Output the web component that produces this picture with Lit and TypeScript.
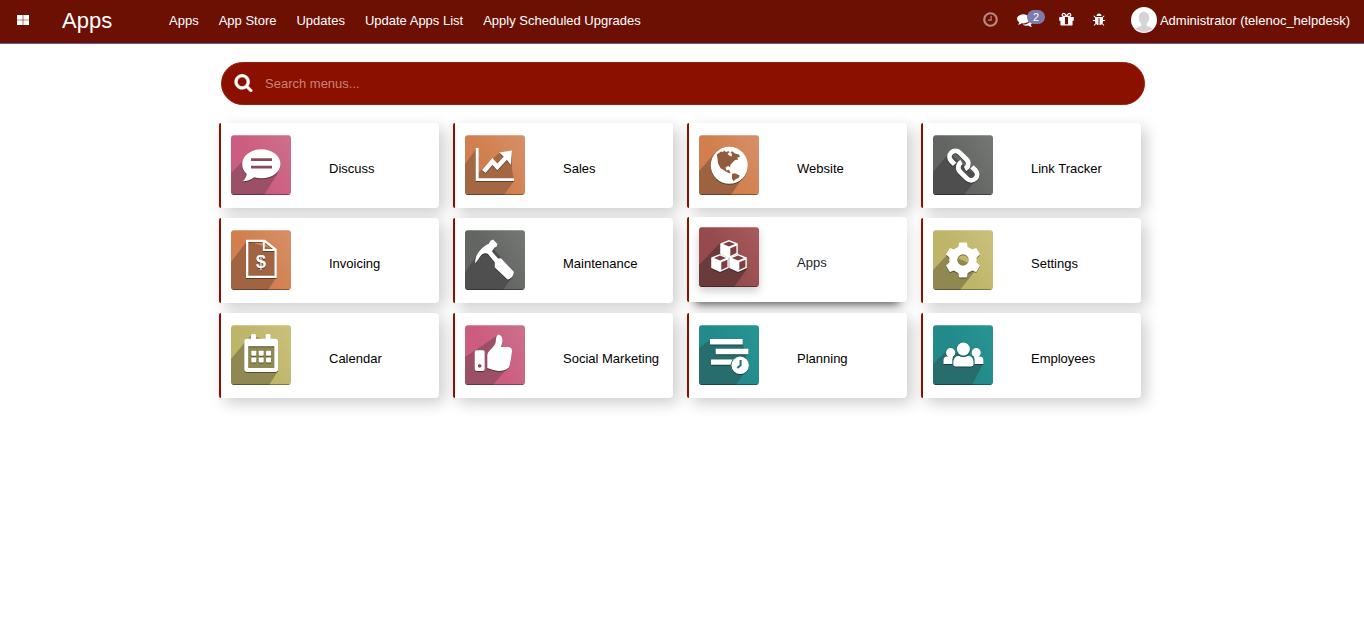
import { LitElement, html, svg, css } from "lit";
import { customElement, property } from "lit/decorators.js";

const SEARCH = "M1216 832q0-185-131.5-316.5t-316.5-131.5-316.5 131.5-131.5 316.5 131.5 316.5 316.5 131.5 316.5-131.5 131.5-316.5zm512 832q0 52-38 90t-90 38q-54 0-90-38l-343-342q-179 124-399 124-143 0-273.5-55.5t-225-150-150-225-55.5-273.5 55.5-273.5 150-225 225-150 273.5-55.5 273.5 55.5 225 150 150 225 55.5 273.5q0 220-124 399l343 343q37 37 37 90z";
const CLOCK = "M1024 544v448q0 14-9 23t-23 9h-320q-14 0-23-9t-9-23v-64q0-14 9-23t23-9h224v-352q0-14 9-23t23-9h64q14 0 23 9t9 23zm416 352q0-148-73-273t-198-198-273-73-273 73-198 198-73 273 73 273 198 198 273 73 273-73 198-198 73-273zm224 0q0 209-103 385.5t-279.5 279.5-385.5 103-385.5-103-279.5-279.5-103-385.5 103-385.5 279.5-279.5 385.5-103 385.5 103 279.5 279.5 103 385.5z";
const COMMENTS = "M1408 768q0 139-94 257t-256.5 186.5-353.5 68.5q-86 0-176-16-124 88-278 128-36 9-86 16h-3q-11 0-20.5-8t-11.5-21q-1-3-1-6.5t.5-6.5 2-6l2.5-5 3.5-5.5 4-5 4.5-5 4-4.5q5-6 23-25t26-29.5 22.5-29 25-38.5 20.5-44q-124-72-195-177t-71-224q0-139 94-257t256.5-186.5 353.5-68.5 353.5 68.5 256.5 186.5 94 257zm384 256q0 120-71 224.5t-195 176.5q10 24 20.5 44t25 38.5 22.5 29 26 29.5 23 25q1 1 4 4.5t4.5 5 4 5 3.5 5.5l2.5 5 2 6 .5 6.5-1 6.5q-3 14-13 22t-22 7q-50-7-86-16-154-40-278-128-90 16-176 16-271 0-472-132 58 4 88 4 161 0 309-45t264-129q125-92 192-212t67-254q0-77-23-152 129 71 204 178t75 230z";
const GIFT = "M1056 1356v-716h-320v716q0 25 18 38.5t46 13.5h192q28 0 46-13.5t18-38.5zm-456-844h195l-126-161q-26-31-69-31-40 0-68 28t-28 68 28 68 68 28zm688-96q0-40-28-68t-68-28q-43 0-69 31l-125 161h194q40 0 68-28t28-68zm376 256v320q0 14-9 23t-23 9h-96v416q0 40-28 68t-68 28h-1088q-40 0-68-28t-28-68v-416h-96q-14 0-23-9t-9-23v-320q0-14 9-23t23-9h440q-93 0-158.5-65.5t-65.5-158.5 65.5-158.5 158.5-65.5q107 0 168 77l128 165 128-165q61-77 168-77 93 0 158.5 65.5t65.5 158.5-65.5 158.5-158.5 65.5h440q14 0 23 9t9 23z";
const BUG = "M1696 960q0 26-19 45t-45 19h-224q0 171-67 290l208 209q19 19 19 45t-19 45q-18 19-45 19t-45-19l-198-197q-5 5-15 13t-42 28.5-65 36.5-82 29-97 13v-896h-128v896q-51 0-101.5-13.5t-87-33-66-39-43.5-32.5l-15-14-183 207q-20 21-48 21-24 0-43-16-19-18-20.5-44.5t15.5-46.5l202-227q-58-114-58-274h-224q-26 0-45-19t-19-45 19-45 45-19h224v-294l-173-173q-19-19-19-45t19-45 45-19 45 19l173 173h844l173-173q19-19 45-19t45 19 19 45-19 45l-173 173v294h224q26 0 45 19t19 45zm-480-576h-640q0-133 93.5-226.5t226.5-93.5 226.5 93.5 93.5 226.5z";

const cube = (x: number, y: number) => svg`<g transform="translate(${x} ${y})">
  <path d="M0-9 8.8-5.4V4.9L0 9-8.8 4.9V-5.4z" fill="#fff"/>
  <path d="M0-7.4 6-5 0-2.5-6-5z" fill="#7d3f41"/>
  <path d="M1.3-.7 7.4-3.3V4L1.3 6.900z" fill="#7d3f41"/></g>`;

const tooth = (a: number) => svg`<path transform="rotate(${a} 30 30)" d="M25 18.500l1-5.200q.1-.8.900-.8h6.200q.8 0 .9.800l1 5.200z"/>`;

const LINK = "M-7 5.200H-11.800A5.900 5.900 0 0 1-11.800-6.600H-2A5.900 5.900 0 0 1 3.600 1.200";

interface App {
  name: string;
  from: string;
  to: string;
  shade: string;
  cast: string;
  glyph: unknown;
  active?: boolean;
}

const PINK = { from: "#cd5d80", to: "#cb718c" };
const ORANGE = { from: "#d17f4e", to: "#d79069" };
const GREY = { from: "#636562", to: "#757874" };
const OLIVE = { from: "#bfb568", to: "#cac17e" };
const TEAL = { from: "#23898a", to: "#279593" };

const APPS: App[] = [
  { name: "Discuss", ...PINK, shade: "#9b5067", cast: "M0 38 14 24 47 38 33 60H0z",
    glyph: svg`<path d="M30.300 14.300C41 14.300 49.500 20.800 49.500 28.900S41 43.300 30.300 43.300c-2.600 0-5-.4-7.300-1.100-3 2.400-7 4-11.200 4 2.200-2 3.600-4.300 3.900-7.300-2.900-2.600-4.500-6-4.500-10C11.200 20.800 19.700 14.300 30.300 14.300z"/><path d="M20 23.300h21v2.700H20zM20 30.700h21v2.700H20z" fill="#8a4a5d"/>` },
  { name: "Sales", ...ORANGE, shade: "#a36744", cast: "M0 29 11 14 13 14 13 38 34 18 47 16 47 34 49 46 39 60H0z",
    glyph: svg`<path d="M10.700 13h3v30.300H49V46H10.700z"/><path d="M18.800 36.500 27.500 26.500 32.300 32 42 21.500" fill="none" stroke="#fff" stroke-width="4.500"/><path d="M47 15.500 34.300 17.500 38 21 42.800 26 45.800 30z"/>` },
  { name: "Website", ...ORANGE, shade: "#9d6341", cast: "M0 36 17 17 48 36 32 60H0z",
    glyph: svg`<circle cx="30.300" cy="30.300" r="18.500"/><path d="M17.800 19.500 22 16.500 24 17 25 15.500 27 17 29.500 16 30.500 17.500 28.500 18.500 30 20.500 32.500 21.500 33 19 31.500 17.500 33 16.300 36 18.500 40 19.500 41 22 38 22.500 39.500 24.500 36 25 33.500 27.500 31 30.500 31.500 32.500 29 31 26.500 32.500 27.500 35.500 30 34.700 31.500 38 30 38.300 26 36 21.500 33 19 28.500 18.500 23.500z" fill="#925c3c"/><path d="M33 38.700 36 38.300 40.800 40.500 39.500 43 37 44 34.500 46.200 33 43.500z" fill="#925c3c"/>` },
  { name: "Link Tracker", ...GREY, shade: "#4d4e4d", cast: "M0 37 16 18 45 42 31 60H0z",
    glyph: svg`<g transform="translate(30.300 30.600) rotate(45)" fill="none" stroke="#fff" stroke-width="4.800"><path d=${LINK}/><path d=${LINK} transform="rotate(180)"/></g>` },
  { name: "Invoicing", ...ORANGE, shade: "#a06442", cast: "M0 32 16 11 45 20 45 48 37 60H0z",
    glyph: svg`<path d="M16.200 10.900H33.500L44.600 19.500V46.800H16.200z" fill="none" stroke="#fff" stroke-width="2.300"/><path d="M32.800 11v9h11.500" fill="none" stroke="#fff" stroke-width="2"/><text x="30" y="38.200" text-anchor="middle" font-family="Liberation Sans, sans-serif" font-weight="700" font-size="18.500">$</text>` },
  { name: "Maintenance", ...GREY, shade: "#4e4f4e", cast: "M0 43 15 20 28 18 49 44 38 60H0z",
    glyph: svg`<path d="M10 33.500C10 26.500 13.500 20 20.500 15.500L24 13.500 25.500 10.700 28 9.500 32.500 14 31.500 17 29.500 17.500 27 21.500 33 28.500 36 28.300 48.500 41.500C50 44.500 45.500 50 42.500 49.500L29.800 37.500V32.500L23 24C21 22.500 18 23 16 25.500 13.500 28.500 12.500 31 10 33.500z"/>` },
  { name: "Apps", from: "#954b4d", to: "#a95a5c", shade: "#6b3a3b", cast: "M0 38 22 15 48 42 35 60H0z", active: true,
    glyph: svg`${cube(30, 22)}${cube(21, 36)}${cube(39, 36)}` },
  { name: "Settings", ...OLIVE, shade: "#8f8850", cast: "M0 40 15 24 45 37 27 60H0z",
    glyph: svg`<mask id="m"><rect width="60" height="60" fill="#fff"/><circle cx="30" cy="30" r="5.700" fill="#000"/></mask><g mask="url(#m)">${[0, 60, 120, 180, 240, 300].map(tooth)}<circle cx="30" cy="30" r="13.800"/></g>` },
  { name: "Calendar", ...OLIVE, shade: "#8f8850", cast: "M0 34 20 10 47 20 47 46 38 60H0z",
    glyph: svg`<path fill-rule="evenodd" d="M16 13.700h3.800V10.500q0-1.500 1.500-1.500h2.200q1.500 0 1.500 1.500v3.200h9.500V10.500q0-1.500 1.500-1.500h2.200q1.500 0 1.500 1.500v3.200H44.300q2.700 0 2.700 2.700V44.300q0 2.700-2.700 2.700H16q-2.700 0-2.700-2.700V16.400q0-2.700 2.700-2.700zM17.200 21.300V43H43.300V21.300z"/>
      ${[20.3, 27.7, 35].map((x) => [25.7, 32.5].map((y) => svg`<rect x=${x} y=${y} width="5" height="5" rx=".8"/>`))}` },
  { name: "Social Marketing", ...PINK, shade: "#9b5067", cast: "M0 32 33 10 45 40 28 60H0z",
    glyph: svg`<path fill-rule="evenodd" d="M11.500 25.300h6.500q1.700 0 1.700 1.700V44q0 2-2 2h-6q-2 0-2-2V27q0-1.700 1.800-1.700zM14.700 39.200a1.800 1.800 0 1 0 0 3.600a1.800 1.800 0 1 0 0-3.600z"/><path d="M22.300 30C23 25.500 28 23.500 30.300 18.500 31.300 16 30.500 11 33 9.700 35.500 9.300 37.500 12 37.500 15.500 37.500 18 36.300 20 36.200 22H43.500Q47.300 22.500 47 26.500L46 34.500 44.500 41Q43.500 44 39 45.200 33 46.800 27.500 44.800L22.300 43z"/>` },
  { name: "Planning", ...TEAL, shade: "#276d6e", cast: "M0 23 11 15 44 19 49 42 37 60H0z",
    glyph: svg`<path d="M11 14h32.700v5.500H11zM16.700 23.700h32.700v5.500H16.700zM12 34.500h21.500l-2 5.300H12z"/><circle cx="41.200" cy="40.300" r="8.700"/><path d="M41.600 35v5.200L38.300 43" fill="none" stroke="#276d6e" stroke-width="2"/>` },
  { name: "Employees", ...TEAL, shade: "#276d6e", cast: "M0 39 14 25 50 39 39 60H0z",
    glyph: svg`<circle cx="17.600" cy="27.700" r="4.600"/><circle cx="43.200" cy="27.700" r="4.600"/><path d="M10.500 39V35.500Q10.500 31.500 14 31.500H19.500Q20.500 32 19.300 34.500V39zM50.400 39V35.500Q50.400 31.500 46.900 31.500H41.500Q40.500 32 41.600 34.500V39z"/><circle cx="30.400" cy="24" r="7.300" fill="#268082"/><circle cx="30.400" cy="24" r="6.500"/><path d="M20.200 39.300Q20.200 31 25.500 30.700q4.900 2.600 9.800 0 5.300.3 5.300 8.600 0 2.100-2.200 2.100H22.400q-2.200 0-2.200-2.100z"/>` },
];

@customElement("fa-icon")
class FaIcon extends LitElement {
  static styles = css`
    :host { display: inline-flex; }
    .icon { width: 100%; height: 100%; fill: currentColor; }
  `;
  @property() d = "";
  render() {
    return html`<svg class="icon" viewBox="0 0 1792 1792"><path d=${this.d}></path></svg>`;
  }
}

@customElement("app-card")
class AppCard extends LitElement {
  static styles = css`
    :host { display: block; }
    .card {
      box-sizing: border-box; width: 220px; height: 85px;
      display: flex; align-items: flex-start;
      padding: 12px 0 0 10px; border-left: 2px solid #8b1000; border-radius: 2px 4px 4px 2px;
      background: #fff; box-shadow: 5px 5px 15px rgba(0, 0, 0, 0.2);
    }
    .tile { display: block; width: 60px; height: 60px; border-radius: 3px; flex: none; }
    .glyph { fill: #fff; filter: drop-shadow(0 1px 0.5px rgba(0, 0, 0, 0.4)); }
    .name {
      margin: 24px 0 0 38px; white-space: nowrap; color: #000;
      font: 400 13px/20px "Liberation Sans", Arial, sans-serif;
    }
    .active { margin-top: -1px; margin-bottom: 1px; padding-top: 10px;
      box-shadow: 0 10px 9px -8px rgba(0, 0, 0, 0.65), 4px 4px 14px rgba(0, 0, 0, 0.1); }
    .active .tile { box-shadow: 0 4px 8px rgba(0, 0, 0, 0.2); }
    .active .name { margin-top: 26px; color: #212529; }
  `;
  @property({ attribute: false }) app!: App;
  render() {
    const a = this.app;
    return html`<div class="card ${a.active ? "active" : ""}">
      <svg class="tile" viewBox="0 0 60 60">
        <defs>
          <linearGradient id="g" x1="0" y1="0.6" x2="1" y2="0">
            <stop offset="0.35" stop-color=${a.from}></stop><stop offset="1" stop-color=${a.to}></stop>
          </linearGradient>
          <clipPath id="c"><rect width="60" height="60" rx="2.500"></rect></clipPath>
        </defs>
        <g clip-path="url(#c)">
          <rect width="60" height="60" fill="url(#g)"></rect>
          <path d=${a.cast} fill=${a.shade}></path>
          <rect width="60" height="1" fill="#fff" opacity="0.25"></rect>
          <rect y="59" width="60" height="1" fill="#000" opacity="0.35"></rect>
        </g>
        <g class="glyph">${a.glyph}</g>
      </svg>
      <span class="name">${a.name}</span>
    </div>`;
  }
}

@customElement("app-root")
class AppRoot extends LitElement {
  static styles = css`
    :host { display: block; min-height: 633px; background: #fff; overflow: hidden;
      font-family: "Liberation Sans", Arial, sans-serif; font-size: 13px; }
    .bar { box-sizing: border-box; height: 44px; display: flex; align-items: center;
      padding: 0 14px 3px 17px; background: #6d1004; border-bottom: 1px solid #5f5e97; color: #fff; white-space: nowrap; }
    .grid-icon { width: 12px; height: 10px; margin-top: -1px; fill: #fff; }
    .brand { font-size: 22px; margin: 1px 0 0 33px; width: 107px; }
    .menu { display: flex; gap: 20px; }
    .tray { margin-left: auto; display: flex; align-items: center; }
    .clock { width: 17px; height: 17px; opacity: 0.5; margin: -2px 18px 0 0; }
    .chat { position: relative; display: flex; width: 41px; }
    .chat-icon { width: 16px; height: 16px; margin-top: -1px; }
    .badge { position: absolute; left: 10px; top: -3px; width: 18px; height: 14px; border-radius: 7px;
      background: #7c7bad; font: 400 11px/14px "Liberation Sans", sans-serif; text-align: center; }
    .gift { width: 17px; height: 17px; margin-top: -1px; }
    .bug { width: 14px; height: 14px; margin: 0 25px 0 17px; }
    .avatar { width: 26px; height: 26px; margin-right: 3px; }
    .search { box-sizing: border-box; width: 924px; height: 43px; margin: 18px 0 0 221px; border-radius: 22px;
      background: #8b1000; border: 1px solid #97200f; display: flex; align-items: center; padding-left: 12px; color: #c7847b; }
    .search-icon { width: 19px; height: 19px; color: #fff; margin: -3px 12px 0 0; stroke: #fff; stroke-width: 50px; }
    .cards { display: grid; grid-template-columns: repeat(4, 220px); gap: 10px 14px; margin: 18px 0 0 219px; }
  `;
  render() {
    return html`
      <header class="bar">
        <svg class="grid-icon" viewBox="0 0 12 10"><path d="M0 0h5.700v4.700H0zM6.300 0H12v4.700H6.300zM0 5.300h5.700V10H0zM6.300 5.300H12V10H6.300z"></path></svg>
        <span class="brand">Apps</span>
        <nav class="menu">
          ${["Apps", "App Store", "Updates", "Update Apps List", "Apply Scheduled Upgrades"].map((t) => html`<span>${t}</span>`)}
        </nav>
        <div class="tray">
          <fa-icon class="clock" .d=${CLOCK}></fa-icon>
          <div class="chat"><fa-icon class="chat-icon" .d=${COMMENTS}></fa-icon><span class="badge">2</span></div>
          <fa-icon class="gift" .d=${GIFT}></fa-icon>
          <fa-icon class="bug" .d=${BUG}></fa-icon>
          <svg class="avatar" viewBox="0 0 26 26"><circle cx="13" cy="13" r="13" fill="#fff"></circle>
            <path d="M13 4.800c3.500 0 5.300 2.600 5.100 6.200-.1 2.700-1.200 4.600-2.400 5.800v1.600c1 1.300 4.300 1.500 6 3A13 13 0 0 1 4.300 21.400c1.700-1.500 5-1.700 6-3v-1.600C9.100 15.600 8 13.700 7.900 11 7.700 7.400 9.500 4.800 13 4.800z" fill="#d4d4d4"></path></svg>
          <span>Administrator (telenoc_helpdesk)</span>
        </div>
      </header>
      <div class="search"><fa-icon class="search-icon" .d=${SEARCH}></fa-icon><span>Search menus...</span></div>
      <main class="cards">${APPS.map((a) => html`<app-card .app=${a}></app-card>`)}</main>
    `;
  }
}
